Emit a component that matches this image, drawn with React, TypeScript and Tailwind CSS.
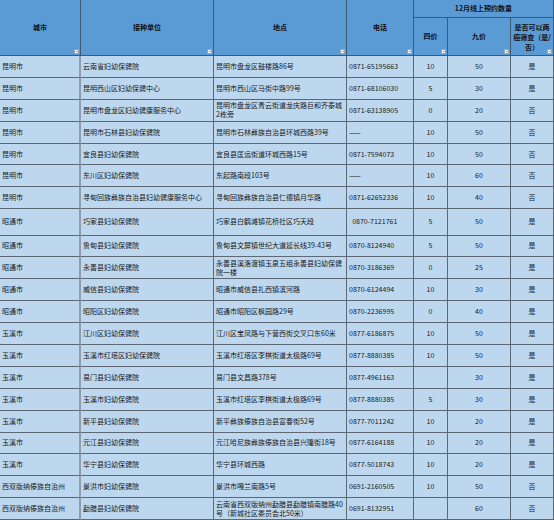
import clsx from 'clsx'

type Row = {
  city: string
  unit: string
  addr: string
  phone: string
  four: string
  nine: string
  yes: string
}

const rows: Row[] = [
  { city: '昆明市', unit: '云南省妇幼保健院', addr: '昆明市盘龙区鼓楼路86号', phone: '0871-65195663', four: '10', nine: '50', yes: '是' },
  { city: '昆明市', unit: '昆明西山区妇幼保健中心', addr: '昆明市西山区马街中路99号', phone: '0871-68106030', four: '5', nine: '30', yes: '是' },
  { city: '昆明市', unit: '昆明市盘龙区妇幼健康服务中心', addr: '昆明市盘龙区青云街道龙庆路巨和齐泰城2栋旁', phone: '0871-63138905', four: '0', nine: '20', yes: '否' },
  { city: '昆明市', unit: '昆明市石林县妇幼保健院', addr: '昆明市石林彝族自治县环城西路39号', phone: '——', four: '10', nine: '50', yes: '否' },
  { city: '昆明市', unit: '宜良县妇幼保健院', addr: '宜良县匡远街道环城西路15号', phone: '0871-7594073', four: '10', nine: '50', yes: '否' },
  { city: '昆明市', unit: '东川区妇幼保健院', addr: '东起路南段103号', phone: '——', four: '10', nine: '60', yes: '否' },
  { city: '昆明市', unit: '寻甸回族彝族自治县妇幼健康服务中心', addr: '寻甸回族彝族自治县仁德镇月华路', phone: '0871-62652336', four: '10', nine: '40', yes: '否' },
  { city: '昭通市', unit: '巧家县妇幼保健院', addr: '巧家县白鹤滩镇花桥社区巧天段', phone: '\u00a0 0870-7121761', four: '5', nine: '50', yes: '是' },
  { city: '昭通市', unit: '鲁甸县妇幼保健院', addr: '鲁甸县文屏镇世纪大道延长线39-43号', phone: '0870-8124940', four: '5', nine: '50', yes: '是' },
  { city: '昭通市', unit: '永善县妇幼保健院', addr: '永善县溪洛渡镇玉泉五组永善县妇幼保健院一楼', phone: '0870-3186369', four: '0', nine: '25', yes: '是' },
  { city: '昭通市', unit: '威信县妇幼保健院', addr: '昭通市威信县扎西镇滨河路', phone: '0870-6124494', four: '10', nine: '30', yes: '是' },
  { city: '昭通市', unit: '昭阳区妇幼保健院', addr: '昭通市昭阳区枫园路29号', phone: '0870-2236995', four: '0', nine: '40', yes: '是' },
  { city: '玉溪市', unit: '江川区妇幼保健院', addr: '江川区宝凤路与下营西街交叉口东60米', phone: '0877-6186875', four: '10', nine: '50', yes: '是' },
  { city: '玉溪市', unit: '玉溪市红塔区妇幼保健院', addr: '玉溪市红塔区李棋街道太极路69号', phone: '0877-8880385', four: '10', nine: '50', yes: '是' },
  { city: '玉溪市', unit: '易门县妇幼保健院', addr: '易门县文昌路378号', phone: '0877-4961163', four: '', nine: '30', yes: '是' },
  { city: '玉溪市', unit: '玉溪市妇幼保健院', addr: '玉溪市红塔区李棋街道太极路69号', phone: '0877-8880385', four: '5', nine: '30', yes: '是' },
  { city: '玉溪市', unit: '新平县妇幼保健院', addr: '新平彝族傣族自治县富春街52号', phone: '0877-7011242', four: '10', nine: '20', yes: '是' },
  { city: '玉溪市', unit: '元江县妇幼保健院', addr: '元江哈尼族彝族傣族自治县兴隆街18号', phone: '0877-6164188', four: '10', nine: '20', yes: '是' },
  { city: '玉溪市', unit: '华宁县妇幼保健院', addr: '华宁县环城西路', phone: '0877-5018743', four: '10', nine: '20', yes: '是' },
  { city: '西双版纳傣族自治州', unit: '景洪市妇幼保健院', addr: '景洪市嘎兰南路5号', phone: '0691-2160505', four: '10', nine: '50', yes: '否' },
  { city: '西双版纳傣族自治州', unit: '勐腊县妇幼保健院', addr: '云南省西双版纳州勐腊县勐腊镇南腊路40号（新城社区委员会北50米）', phone: '0691-8132951', four: '', nine: '60', yes: '否' },
]

function Filter() {
  return (
    <span className="absolute bottom-[1px] right-[1px] flex h-[5px] w-[5px] items-center justify-center border border-[#9aa7b3] bg-[#eef2f6]">
      <span className="h-0 w-0 border-x-[1.5px] border-t-[1.5px] border-x-transparent border-t-[#55606b]" />
    </span>
  )
}

function Head({ children, className, filter = true }: { children: React.ReactNode; className?: string; filter?: boolean }) {
  return (
    <div
      className={clsx(
        'relative flex items-center justify-center border-b border-r border-[#3f5a73] bg-[#5b9bd5] px-[2px] text-center font-bold text-[#111]',
        className
      )}
    >
      <span>{children}</span>
      {filter && <Filter />}
    </div>
  )
}

function Cell({ children, className }: { children: React.ReactNode; className?: string }) {
  return (
    <div className={clsx('flex items-center border-b border-r border-[#5d6874] bg-[#bdd7ee] px-[2px]', className)}>
      <span>{children}</span>
    </div>
  )
}

export default function App() {
  return (
    <div className="h-[520px] w-[554px] overflow-hidden bg-white font-['Noto_Sans_CJK_SC',sans-serif] text-[7px] leading-[9px] text-[#1a1a1a]">
      <div className="grid grid-cols-[81px_133px_133px_67px_34px_63px_43px] grid-rows-[18px_38px_repeat(7,21.9px)_26.3px_repeat(13,21.9px)]">
        <Head className="row-span-2">城市</Head>
        <Head className="row-span-2">接种单位</Head>
        <Head className="row-span-2">地点</Head>
        <Head className="row-span-2">电话</Head>
        <Head className="col-span-3" filter={false}>12月线上预约数量</Head>
        <Head>四价</Head>
        <Head>九价</Head>
        <Head className="whitespace-nowrap px-0 leading-[10px]">
          是否可以两
          <br />
          癌筛查（是/
          <br />
          否）
        </Head>

        {rows.map((r, i) => (
          <div key={i} className="contents">
            <Cell className="border-r-2 border-r-[#8f9cab]">{r.city}</Cell>
            <Cell>{r.unit}</Cell>
            <Cell>{r.addr}</Cell>
            <Cell>{r.phone}</Cell>
            <Cell className="justify-center">{r.four}</Cell>
            <Cell className="justify-center">{r.nine}</Cell>
            <Cell className="justify-center">{r.yes}</Cell>
          </div>
        ))}
      </div>
    </div>
  )
}
